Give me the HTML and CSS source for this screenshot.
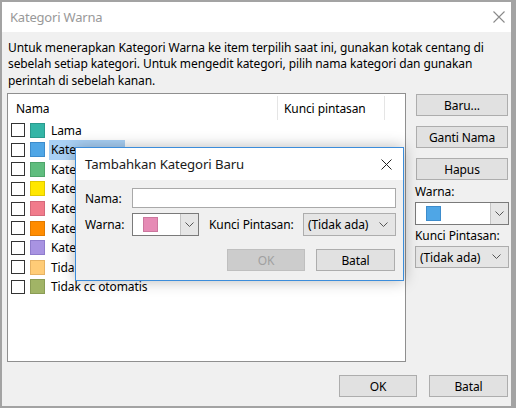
FILE: index.html
```html
<!DOCTYPE html>
<html lang="id">
<head>
    <meta charset="UTF-8">
    <title>Kategori Warna</title>
    <link rel="stylesheet" href="styles.css">
</head>
<body>
    <div class="window">
        <div class="titlebar">
            <span class="title">Kategori Warna</span>
            <svg class="close" width="12" height="12" viewBox="0 0 12 12"><path d="M0.5 0.5 L11.5 11.5 M11.5 0.5 L0.5 11.5" stroke="#8a8a8a" stroke-width="1.1" fill="none"/></svg>
        </div>
        <div class="content">
            <p class="intro">Untuk menerapkan Kategori Warna ke item terpilih saat ini, gunakan kotak centang di<br>sebelah setiap kategori. Untuk mengedit kategori, pilih nama kategori dan gunakan<br>perintah di sebelah kanan.</p>
            <div class="main">
                <div class="listbox">
                    <div class="list-head">
                        <div class="col col-name">Nama</div>
                        <div class="col col-key">Kunci pintasan</div>
                    </div>
                    <ul class="cats">
                        <li><span class="check"></span><span class="swatch teal"></span><span class="label">Lama</span></li>
                        <li><span class="check"></span><span class="swatch blue"></span><span class="label sel">Kate</span></li>
                        <li><span class="check"></span><span class="swatch green"></span><span class="label">Kate</span></li>
                        <li><span class="check"></span><span class="swatch yellow"></span><span class="label">Kate</span></li>
                        <li><span class="check"></span><span class="swatch red"></span><span class="label">Kate</span></li>
                        <li><span class="check"></span><span class="swatch orange"></span><span class="label">Kate</span></li>
                        <li><span class="check"></span><span class="swatch purple"></span><span class="label">Kate</span></li>
                        <li><span class="check"></span><span class="swatch peach"></span><span class="label">Tida</span></li>
                        <li><span class="check"></span><span class="swatch olive"></span><span class="label">Tidak cc otomatis</span></li>
                    </ul>
                </div>
                <div class="side">
                    <button class="btn side-btn first">Baru...</button>
                    <button class="btn side-btn">Ganti Nama</button>
                    <button class="btn side-btn">Hapus</button>
                    <div class="side-label">Warna:</div>
                    <div class="combo side-combo">
                        <span class="combo-val"><span class="swatch blue"></span></span>
                        <span class="drop"><svg width="9" height="6" viewBox="0 0 9 6"><path d="M0.5 0.5 L4.5 4.5 L8.5 0.5" stroke="#555" fill="none"/></svg></span>
                    </div>
                    <div class="side-label short">Kunci Pintasan:</div>
                    <div class="select side-select">
                        <span>(Tidak ada)</span>
                        <svg width="9" height="6" viewBox="0 0 9 6"><path d="M0.5 0.5 L4.5 4.5 L8.5 0.5" stroke="#555" fill="none"/></svg>
                    </div>
                </div>
            </div>
            <div class="footer">
                <button class="btn ok">OK</button>
                <button class="btn cancel">Batal</button>
            </div>
        </div>

        <div class="dialog">
            <div class="dlg-title">
                <span>Tambahkan Kategori Baru</span>
                <svg width="11" height="11" viewBox="0 0 11 11"><path d="M0.5 0.5 L10.5 10.5 M10.5 0.5 L0.5 10.5" stroke="#222" stroke-width="1" fill="none"/></svg>
            </div>
            <div class="dlg-body">
                <div class="dlg-row">
                    <span class="dlg-label">Nama:</span>
                    <span class="textbox"></span>
                </div>
                <div class="dlg-row second">
                    <span class="dlg-label">Warna:</span>
                    <div class="combo dlg-combo">
                        <span class="combo-val"><span class="swatch pink"></span></span>
                        <span class="drop"><svg width="9" height="6" viewBox="0 0 9 6"><path d="M0.5 0.5 L4.5 4.5 L8.5 0.5" stroke="#555" fill="none"/></svg></span>
                    </div>
                    <span class="key-label">Kunci Pintasan:</span>
                    <div class="select dlg-select">
                        <span>(Tidak ada)</span>
                        <svg width="9" height="6" viewBox="0 0 9 6"><path d="M0.5 0.5 L4.5 4.5 L8.5 0.5" stroke="#555" fill="none"/></svg>
                    </div>
                </div>
                <div class="dlg-buttons">
                    <button class="btn ok disabled">OK</button>
                    <button class="btn cancel">Batal</button>
                </div>
            </div>
        </div>
    </div>
</body>
</html>
```

FILE: styles.css
```css
*{
    margin: 0;
    padding: 0;
    box-sizing: border-box;
}
body{
    font-family: "Noto Sans", "Segoe UI", sans-serif;
    font-size: 12px;
    letter-spacing: -0.1px;
    color: #000;
    background: #fff;
}
.window{
    position: relative;
    width: 516px;
    height: 408px;
    border: 2px solid #a3a3a3;
    border-right-width: 5px;
    background: #f0f0f0;
    display: flex;
    flex-direction: column;
}
.titlebar{
    height: 30px;
    background: #fff;
    display: flex;
    align-items: center;
    justify-content: space-between;
    padding: 0 6px 0 8px;
}
.titlebar .title{
    color: #999;
    font-size: 13px;
    letter-spacing: -0.2px;
}
.content{
    flex: 1;
    padding: 8px 2px 0 5px;
}
.intro{
    padding-left: 1px;
    line-height: 16.3px;
    white-space: nowrap;
}
.main{
    display: flex;
    gap: 9px;
    margin-top: 4.5px;
}

/* list of categories */
.listbox{
    width: 399px;
    height: 269px;
    background: #fff;
    border: 1px solid #8f8f8f;
}
.list-head{
    display: flex;
    height: 26px;
    padding-top: 2px;
}
.col{
    display: flex;
    align-items: center;
    border-right: 1px solid #e5e5e5;
}
.col-name{
    width: 270px;
    padding-left: 8px;
}
.col-key{
    width: 107px;
    padding-left: 6px;
}
.cats{
    list-style: none;
}
.cats li{
    display: flex;
    align-items: center;
    height: 19.6px;
    padding-left: 3px;
}
.check{
    width: 14px;
    height: 14px;
    border: 1px solid #333;
    background: #fff;
    margin-right: 5px;
}
.swatch{
    display: block;
    width: 15px;
    height: 15px;
    border: 1px solid;
}
.label{
    height: 100%;
    display: flex;
    align-items: center;
    padding: 0 2px;
    margin-left: 4px;
    white-space: nowrap;
}
.label.sel{
    width: 76px;
    background: #a9d0f5;
}
.teal{ background: #33b5a6; border-color: #2a9a8d; }
.blue{ background: #4fa6e6; border-color: #3d8ccc; }
.green{ background: #5fbd7e; border-color: #4ea46a; }
.yellow{ background: #ffe700; border-color: #e0c800; }
.red{ background: #f17b8b; border-color: #d4697a; }
.orange{ background: #ff8c00; border-color: #e07a00; }
.purple{ background: #a893e2; border-color: #8f7ccc; }
.peach{ background: #ffcc77; border-color: #e6b263; }
.olive{ background: #a1b466; border-color: #8a9c55; }
.pink{ background: #e68bb5; border-color: #cc779e; }

/* buttons & combos */
.btn{
    height: 22px;
    background: #e1e1e1;
    border: 1px solid #adadad;
    font: inherit;
    letter-spacing: inherit;
    color: #000;
}
.btn.disabled{
    background: #cccccc;
    border-color: #bfbfbf;
    color: #a0a0a0;
}
.side{
    width: 94px;
    display: flex;
    flex-direction: column;
}
.side-btn{
    width: 92px;
    margin-left: 1px;
    margin-top: 10px;
}
.side-btn.first{
    margin-top: 1px;
}
.side-label{
    height: 22px;
    display: flex;
    align-items: flex-end;
    padding-bottom: 2px;
}
.side-label.short{
    height: 21px;
}
.combo{
    display: flex;
    height: 23px;
    border: 1px solid #7a7a7a;
    background: #fff;
}
.combo-val{
    flex: 1;
    display: flex;
    align-items: center;
    padding-left: 10px;
}
.drop{
    width: 18px;
    display: flex;
    align-items: center;
    justify-content: center;
    background: #e6e6e6;
    border-left: 1px solid #c4c4c4;
}
.select{
    display: flex;
    align-items: center;
    justify-content: space-between;
    height: 22px;
    background: #e5e5e5;
    border: 1px solid #adadad;
    padding: 0 7px 0 4px;
    white-space: nowrap;
}
.footer{
    display: flex;
    justify-content: flex-end;
    gap: 12px;
    margin-top: 13px;
    padding-right: 1px;
}
.footer .ok{ width: 78px; }
.footer .cancel{ width: 79px; }

/* the "new category" dialog on top */
.dialog{
    position: absolute;
    left: 73px;
    top: 145px;
    width: 329px;
    height: 134px;
    border: 1px solid #3c8ddb;
    background: #f0f0f0;
    box-shadow: 0 0 14px rgba(0,0,0,.28);
}
.dlg-title{
    height: 32px;
    background: #fff;
    display: flex;
    align-items: center;
    justify-content: space-between;
    padding: 0 11px 0 9px;
    font-size: 13.2px;
    letter-spacing: -0.1px;
    color: #1a1a1a;
}
.dlg-body{
    padding: 8px 7px 0 9px;
}
.dlg-row{
    display: flex;
    align-items: center;
}
.dlg-row.second{
    margin-top: 5px;
}
.dlg-label{
    width: 47px;
}
.textbox{
    flex: 1;
    height: 20px;
    background: #fff;
    border: 1px solid #a9a9a9;
}
.dlg-combo{
    width: 67px;
}
.key-label{
    margin-left: 10px;
}
.dlg-select{
    width: 93px;
    height: 23px;
    margin-left: auto;
}
.dlg-buttons{
    display: flex;
    justify-content: flex-end;
    gap: 11px;
    margin-top: 13px;
    padding-right: 1px;
}
.dlg-buttons .ok{ width: 78px; }
.dlg-buttons .cancel{ width: 79px; }
```
